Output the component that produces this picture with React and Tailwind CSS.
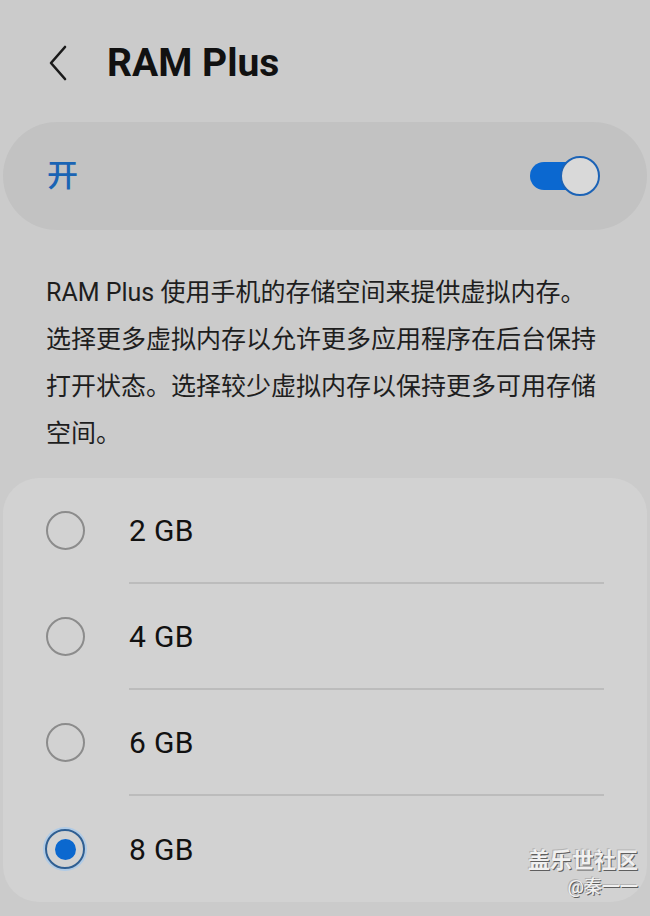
import React from "react";

const latin = { fontFamily: "Roboto, 'Noto Sans CJK SC', sans-serif" };
const cjk = { fontFamily: "Roboto, 'Noto Sans CJK SC', sans-serif" };

function Radio({ checked }) {
  if (checked) {
    return (
      <div className="flex h-[40px] w-[40px] items-center justify-center rounded-full border-2 border-[#2f5f93] shadow-[0_0_0_2px_rgba(160,200,240,0.7)]">
        <div className="h-[21px] w-[21px] rounded-full bg-[#0b68cf]" />
      </div>
    );
  }
  return <div className="h-[39px] w-[39px] rounded-full border-2 border-[#8c8c8c]" />;
}

function Option({ label, checked, last }) {
  return (
    <div className="flex h-[106px] flex-col">
      <div className="flex flex-1 items-center">
        <div className="ml-[42px] mr-[44px] flex w-[40px] justify-center">
          <Radio checked={checked} />
        </div>
        <span className="text-[30px] text-[#111] tracking-[0.3px]" style={latin}>
          {label}
        </span>
      </div>
      {!last && <div className="ml-[126px] mr-[43px] h-[2px] bg-[#bcbcbc]" />}
    </div>
  );
}

export default function App() {
  const options = ["2 GB", "4 GB", "6 GB", "8 GB"];
  return (
    <div className="relative h-[916px] w-[650px] overflow-hidden bg-[#cbcbcb]" style={cjk}>
      {/* header */}
      <div className="flex h-[122px] items-center pt-[4px]">
        <svg className="ml-[46px] h-[36px] w-[24px]" viewBox="0 0 24 36" fill="none">
          <path d="M19 2 L5 18 L19 34" stroke="#1a1a1a" strokeWidth="2.6" strokeLinecap="round" strokeLinejoin="round" />
        </svg>
        <h1 className="ml-[37px] text-[39px] font-bold text-[#111]" style={latin}>
          RAM Plus
        </h1>
      </div>

      {/* master switch */}
      <div className="mx-[3px] flex h-[108px] items-center justify-between rounded-full bg-[#c2c2c2] pl-[44px] pr-[47px]">
        <span className="text-[31px] font-medium text-[#1a64b4]">开</span>
        <div className="relative h-[40px] w-[70px]">
          <div className="absolute left-0 top-[6px] h-[28px] w-[50px] rounded-full bg-[#0b68d0]" />
          <div className="absolute right-0 top-0 h-[40px] w-[40px] rounded-full border-2 border-[#1c63b6] bg-[#d9d9d9]" />
        </div>
      </div>

      {/* description */}
      <p className="mt-[39px] px-[46px] text-[25px] leading-[47px] text-[#1e1e1e]">
        RAM Plus 使用手机的存储空间来提供虚拟内存。选择更多虚拟内存以允许更多应用程序在后台保持打开状态。选择较少虚拟内存以保持更多可用存储空间。
      </p>

      {/* size options */}
      <div className="mx-[3px] mt-[21px] rounded-[36px] bg-[#d2d2d2]">
        {options.map((o, i) => (
          <Option key={o} label={o} checked={i === 3} last={i === 3} />
        ))}
      </div>

      {/* community watermark */}
      <div className="absolute bottom-[18px] right-[12px] flex flex-col items-end text-[#f0f0f0] [text-shadow:1px_1px_0_#5e5e5e,-1px_-1px_0_#b4b4b4]">
        <span className="text-[22px] font-bold leading-[30px]">盖乐世社区</span>
        <span className="text-[18px] font-medium leading-[22px]">@秦一一</span>
      </div>
    </div>
  );
}
